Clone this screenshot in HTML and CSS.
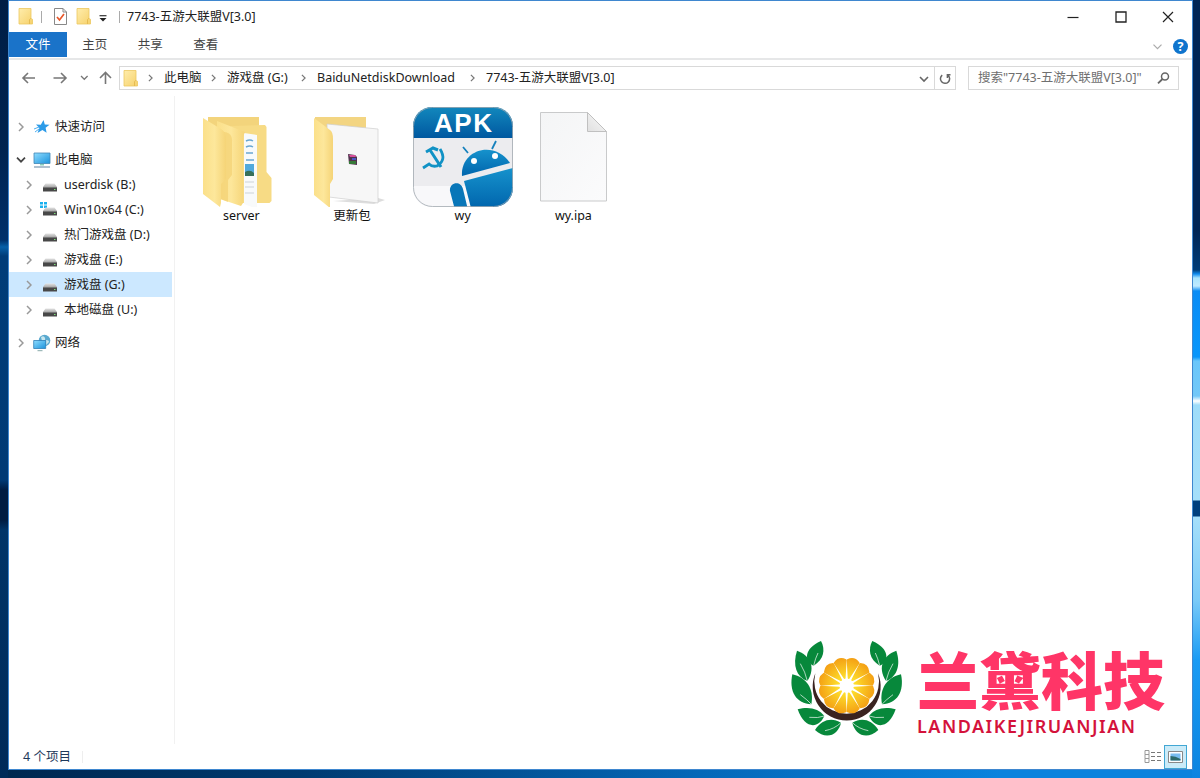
FILE: index.html
```
<!DOCTYPE html>
<html lang="zh-CN">
<head>
<meta charset="utf-8">
<title>7743-五游大联盟V[3.0]</title>
<link rel="stylesheet" href="styles.css">
</head>
<body>
<svg class="defs" width="0" height="0">
  <defs>
    <linearGradient id="fold" x1="0" x2="1" y2="1"><stop offset="0" stop-color="#ffedac"/><stop offset="1" stop-color="#f6d16b"/></linearGradient>
    <linearGradient id="flap" x1="0" x2="1"><stop offset="0" stop-color="#fbe08a"/><stop offset=".5" stop-color="#fde79b"/><stop offset="1" stop-color="#f5d477"/></linearGradient>
    <linearGradient id="screen" x1="0" x2="1" y2="1"><stop offset="0" stop-color="#8fdcff"/><stop offset="1" stop-color="#1b93dc"/></linearGradient>
    <linearGradient id="disk" x2="0" y2="1"><stop offset="0" stop-color="#e4e4e4"/><stop offset="1" stop-color="#aaa"/></linearGradient>
    <linearGradient id="apk" x2="0" y2="1"><stop offset="0" stop-color="#1288bd"/><stop offset="1" stop-color="#0058a0"/></linearGradient>
    <linearGradient id="droid" x2="0" y2="1"><stop offset="0" stop-color="#1692cc"/><stop offset="1" stop-color="#0065ad"/></linearGradient>
    <linearGradient id="paper" x1="0" x2="1" y2="1"><stop offset="0" stop-color="#f4f5f6"/><stop offset="1" stop-color="#fbfbfc"/></linearGradient>
    <linearGradient id="curl" x1="0" x2="1" y1="1" y2="0"><stop offset="0" stop-color="#e0e0e0"/><stop offset="1" stop-color="#fafafa"/></linearGradient>
    <radialGradient id="orange" gradientUnits="userSpaceOnUse" cx="0" cy="0" r="90"><stop offset=".15" stop-color="#ffe930"/><stop offset="1" stop-color="#f39a12"/></radialGradient>
    <symbol id="folder" viewBox="0 0 15 17"><path d="M1 .5h12v10l1.500 .8V16H1z" fill="url(#fold)" stroke="#ecc860" stroke-width=".8"/><path d="M11.500 16v-4.500l1.500-1.200" fill="none" stroke="#e3b94e" stroke-width=".9"/></symbol>
    <symbol id="chev" viewBox="0 0 6 10"><path d="M1 1l4 4-4 4" fill="none" stroke="currentColor" stroke-width="1.500"/></symbol>
    <symbol id="drive" viewBox="0 0 16 14"><path d="M3.500 4.500h9L15 8H1z" fill="url(#disk)"/><path d="M1 8h14v4.500H1z" fill="#484848"/><path d="M1 8h14v1H1z" fill="#777"/><path d="M12 10h1.500v1H12z" fill="#7ee07b"/></symbol>
    <g id="leaves" fill="#07883b">
      <path d="M123 33C136 57 133 88 101 107C74 97 68 57 123 33Z"/>
      <path d="M51 62C90 76 109 111 82 153C49 140 37 106 51 62Z"/>
      <path d="M37 133C79 142 103 176 94 223C49 222 26 184 37 133Z"/>
      <path d="M53 238C86 228 117 236 133 258C115 298 73 297 53 238Z"/>
      <path d="M105 300C125 267 157 262 183 278C176 312 141 333 105 300Z"/>
      <g fill="none" stroke="#fff" stroke-width="2"><path d="M101 107Q106 85 114 69M82 153Q76 126 61 101M94 223Q83 210 61 194M133 258Q115 265 88 262M183 278Q163 297 135 302"/></g>
    </g>
  </defs>
</svg>
<main class="window">
  <header class="titlebar">
    <svg class="tb-folder" width="15" height="17"><use href="#folder"/></svg>
    <i class="sep"></i>
    <svg class="tb-check" width="13" height="17" viewBox="0 0 13 17"><path d="M.5.5h8.500l3.500 3.500v12.500H.5z" fill="#fff" stroke="#888"/><path d="M9 .5V4h3.500" fill="none" stroke="#888"/><path d="M3 9l2.500 3L10 6" fill="none" stroke="#e8572a" stroke-width="1.700"/></svg>
    <svg class="tb-folder2" width="15" height="17"><use href="#folder"/></svg>
    <svg class="tb-drop" width="8" height="7" viewBox="0 0 8 7"><path d="M.5.700h7" stroke="#333" stroke-width="1.200"/><path d="M.5 3h7L4 6.500z" fill="#222"/></svg>
    <i class="sep"></i>
    <span class="title">7743-五游大联盟V[3.0]</span>
    <span class="controls">
      <svg width="12" height="12" viewBox="0 0 12 12"><path d="M.5 6.500h11" stroke="#222" stroke-width="1.200"/></svg>
      <svg width="12" height="12" viewBox="0 0 12 12"><path d="M1 1h10v10H1z" fill="none" stroke="#222" stroke-width="1.300"/></svg>
      <svg width="12" height="12" viewBox="0 0 12 12"><path d="M1 1l10 10M11 1L1 11" stroke="#222" stroke-width="1.200"/></svg>
    </span>
  </header>
  <nav class="tabs">
    <span class="tab file">文件</span><span class="tab">主页</span><span class="tab">共享</span><span class="tab">查看</span>
    <svg class="expand" width="9" height="6" viewBox="0 0 9 6"><path d="M.5.700l4 4 4-4" fill="none" stroke="#aaa" stroke-width="1.200"/></svg>
    <span class="help">?</span>
  </nav>
  <div class="toolbar">
    <svg class="arrows" width="92" height="16" viewBox="0 0 92 16" fill="none" stroke="#777" stroke-width="1.600"><path d="M14 8H2M7 3L2 8l5 5"/><path d="M32.500 8h12M40 3l5 5-5 5"/><path d="M60 6l3.300 3.300L66.600 6" stroke-width="1.300"/><path d="M84.500 14V2.500M79 8l5.500-5.500L90 8"/></svg>
    <div class="address">
      <svg class="af" width="15" height="17"><use href="#folder"/></svg>
      <svg class="c" width="5" height="8"><use href="#chev"/></svg><span class="k1">此电脑</span>
      <svg class="c" width="5" height="8"><use href="#chev"/></svg><span class="k2">游戏盘 (G:)</span>
      <svg class="c" width="5" height="8"><use href="#chev"/></svg><span class="k3">BaiduNetdiskDownload</span>
      <svg class="c" width="5" height="8"><use href="#chev"/></svg><span class="k4">7743-五游大联盟V[3.0]</span>
      <svg class="down" width="10" height="7" viewBox="0 0 10 7"><path d="M1 1l4 4 4-4" fill="none" stroke="#666" stroke-width="1.600"/></svg>
      <span class="refresh"><svg width="12" height="13" viewBox="0 0 12 13"><path d="M3 3.200A4.600 4.600 0 1 0 8.800 3.100M3.600 6V2.800H.5" fill="none" stroke="#666" stroke-width="1.500" transform="translate(12 0) scale(-1 1)"/></svg></span>
    </div>
    <div class="search"><span>搜索"7743-五游大联盟V[3.0]"</span><svg width="13" height="12" viewBox="0 0 13 12"><circle cx="8" cy="4.500" r="3.500" fill="none" stroke="#666" stroke-width="1.500"/><path d="M5.500 7L1 11.300" stroke="#666" stroke-width="1.800"/></svg></div>
  </div>
  <section class="body">
    <aside class="nav">
      <div class="row top"><svg class="x" width="6" height="10"><use href="#chev"/></svg><svg class="ic" width="18" height="16" viewBox="0 0 18 16"><path d="M10.500 1l1.300 4.500 4.700.3-3.900 2.900 1 5-4.200-2.600-4.900 3 1.900-5L3 5.500l4.800.2z" fill="#2c9be8"/><path d="M1 10l5-2M2 13l4-3" stroke="#4daef0"/></svg><span>快速访问</span></div>
      <div class="row top gap"><svg class="x open" width="10" height="6" viewBox="0 0 10 6"><path d="M1 .700l4 4 4-4" fill="none" stroke="#444" stroke-width="1.700"/></svg><svg class="ic" width="18" height="16" viewBox="0 0 18 16"><path d="M1 1h16v10.500H1z" fill="url(#screen)" stroke="#4186b5" stroke-width=".8"/><path d="M7 12h4v1.500H7z" fill="#8cb"/><path d="M1 15h16" stroke="#7b98b0" stroke-width="1.200"/></svg><span>此电脑</span></div>
      <div class="row"><svg class="x" width="6" height="10"><use href="#chev"/></svg><svg class="ic" width="16" height="14"><use href="#drive"/></svg><span>userdisk (B:)</span></div>
      <div class="row"><svg class="x" width="6" height="10"><use href="#chev"/></svg><svg class="ic win" width="18" height="15" viewBox="0 0 18 15"><path d="M0 0h3v2.500H0zM4 0h3v2.500H4zM0 3.500h3V6H0zM4 3.500h3V6H4z" fill="#19b0ee"/><use href="#drive" x="2" y="1" width="16" height="14"/></svg><span>Win10x64 (C:)</span></div>
      <div class="row"><svg class="x" width="6" height="10"><use href="#chev"/></svg><svg class="ic" width="16" height="14"><use href="#drive"/></svg><span>热门游戏盘 (D:)</span></div>
      <div class="row"><svg class="x" width="6" height="10"><use href="#chev"/></svg><svg class="ic" width="16" height="14"><use href="#drive"/></svg><span>游戏盘 (E:)</span></div>
      <div class="row on"><svg class="x" width="6" height="10"><use href="#chev"/></svg><svg class="ic" width="16" height="14"><use href="#drive"/></svg><span>游戏盘 (G:)</span></div>
      <div class="row"><svg class="x" width="6" height="10"><use href="#chev"/></svg><svg class="ic" width="16" height="14"><use href="#drive"/></svg><span>本地磁盘 (U:)</span></div>
      <div class="row top gap"><svg class="x" width="6" height="10"><use href="#chev"/></svg><svg class="ic" width="18" height="18" viewBox="0 0 18 18"><circle cx="11.500" cy="6.500" r="5.800" fill="#5aa9cf"/><path d="M8 3q3-2 4 1t-3 3zM13 6q3 0 3 2l-3 3z" fill="#c7e6ee"/><path d="M.700 6.500h12v8H.700z" fill="url(#screen)" stroke="#2f7fb8" stroke-width=".8"/><path d="M4.500 16.700h5" stroke="#8aa"/></svg><span>网络</span></div>
    </aside>
    <div class="content">
      <div class="files">
        <figure>
          <svg width="100" height="100" viewBox="0 0 100 100"><path d="M17 10h51v60H17z" fill="#f3d47c"/><path d="M40 19l34-1 1.500 2v45l5 6v23l-2 2H45z" fill="#f7db85"/><path d="M53 26l13 2v74l-13-5z" fill="#f8fafb"/><path d="M55 34q4-2 7 0M55 40q4-2 7 0M55 46h7M55 53h8" stroke="#69a7d2" stroke-width="1.500" fill="none"/><path d="M54 57h9v12h-9z" fill="#51a9dc"/><path d="M54 65q5-3 9 1v3h-9z" fill="#37705a"/><path d="M54 75h9M54 80h9M54 86h9" stroke="#ccd3d8"/><path d="M26 14l28 11q-2 3-2 8v63l-2 3-24-8z" fill="url(#flap)"/><path d="M27 25q15-2 14 10v33l-4 5v22l-10-4z" fill="#f2d070" opacity=".65"/><path d="M17 10l16 10q2 2 2 7v72l-5 2-18-13V12q0-2 5-2z" transform="translate(0 0)" fill="none"/><path d="M12 11l18 11q5 3 5 10v40l-5 5v19l-1 4-17-13z" fill="url(#flap)"/></svg>
          <figcaption>server</figcaption>
        </figure>
        <figure>
          <svg width="100" height="100" viewBox="0 0 100 100"><path d="M13 10h51v30H13z" fill="#f3d582"/><path d="M76 91l7 2-11 4-41-3z" fill="#ddd"/><path d="M25 17l51 5v74l-49-6z" fill="#f7f7f7" stroke="#cfcfcf" stroke-width=".7"/><path d="M46 47l7 1 2 2v8l-8-1z" fill="#51324e"/><path d="M47 48h6l1 2h-6z" fill="#d64e9a"/><path d="M47 54h7v3h-7z" fill="#367a38"/><path d="M50 51h4v2h-4z" fill="#4c57c5"/><path d="M12 11l16 12q3 2 3 9v40l-3 5v24L12 88z" fill="url(#flap)"/></svg>
          <figcaption>更新包</figcaption>
        </figure>
        <figure>
          <svg width="100" height="100" viewBox="0 0 100 100"><clipPath id="r"><rect width="100" height="100" rx="19"/></clipPath><g clip-path="url(#r)"><path d="M0 0h100v100H0z" fill="#ececef"/><path d="M0 79h100v21H0z" fill="#f8f8fa"/><path d="M0 0h100v31H0z" fill="url(#apk)"/><path d="M49 69C47 43 81 32 97 56z" fill="url(#droid)"/><path d="M51 74l49-13v40H58z" fill="url(#droid)"/><path d="M55 46l-5-6M79 42l4-8" stroke="#1681bd" stroke-width="1.800"/><circle cx="61" cy="54" r="3" fill="#fff"/><circle cx="82" cy="49" r="3" fill="#fff"/><path d="M37 84c-1-9 11-11 13-2l5 21H42z" fill="#0876b8"/></g><g fill="none" stroke="#1192c5" stroke-width="3"><path d="M13 45l7-4 5 2M17 43l11 17"/><path d="M27 42q7 11-3 17-5 1-8-2l-6 4" stroke-width="2.800"/></g><rect x=".5" y=".5" width="99" height="99" rx="19" fill="none" stroke="#a2aab0" stroke-width=".8"/><text x="50" y="25" text-anchor="middle" textLength="58" class="apktext">APK</text></svg>
          <figcaption>wy</figcaption>
        </figure>
        <figure>
          <svg width="100" height="100" viewBox="0 0 100 100"><path d="M17.500 5.500h47l19 19V94h-66z" fill="url(#paper)" stroke="#c9cacb"/><path d="M64.500 5.500v19h19z" fill="url(#curl)" stroke="#c0c0c0"/></svg>
          <figcaption>wy.ipa</figcaption>
        </figure>
      </div>
      <div class="brand">
        <svg width="130" height="115" viewBox="0 0 390 345"><use href="#leaves"/><use href="#leaves" transform="translate(400 0) scale(-1 1)"/><circle cx="200" cy="172" r="104" fill="#fff"/><path d="M106 130A102 102 0 1 0 294 130A97 97 0 1 1 106 130Z" fill="#3a2320"/><g transform="translate(200 167)"><g id="w6" fill="url(#orange)" stroke="url(#orange)" stroke-width="6" stroke-linejoin="round"><g id="w3"><path id="w" d="M0-24L-17-75Q0-89 17-75Z" transform="rotate(15)"/><use href="#w" transform="rotate(30)"/><use href="#w" transform="rotate(60)"/></g><use href="#w3" transform="rotate(90)"/></g><use href="#w6" transform="rotate(180)"/></g></svg>
        <div class="words"><b>兰黛科技</b><span>LANDAIKEJIRUANJIAN</span></div>
      </div>
    </div>
  </section>
  <footer class="status"><span>4 个项目</span><i></i>
    <svg class="list" width="18" height="14" viewBox="0 0 18 14"><path d="M1 .5h4v4H1zM1 4.500h4v4H1zM1 8.500h4v4H1z" fill="#fff" stroke="#999"/><path d="M7 2.500h4M13 2.500h4M7 6.500h4M13 6.500h4M7 10.500h4M13 10.500h4" stroke="#777" stroke-width="1.200"/></svg>
    <span class="large"><svg width="15" height="12" viewBox="0 0 15 12"><path d="M.5.5h14v11H.5z" fill="#fff" stroke="#888"/><path d="M2.500 2.500h10v7h-10z" fill="#79bdf0"/><path d="M2.500 5q5 0 10 3v1.500h-10z" fill="#2d6b6a"/></svg></span>
  </footer>
</main>
</body>
</html>
```
FILE: styles.css
```
* { box-sizing: border-box; }
body {
  margin: 0; width: 1200px; height: 778px; padding: 0 7px 8px 8px; overflow: hidden;
  font: 12.5px/16px "Noto Sans", "Noto Sans CJK SC", sans-serif; color: #222;
  background:
    linear-gradient(#002555 0 230px, #003d78 270px, #0e8cf0 274px, #a8e4fd 278px, #bfeaff 286px, #0a8cf5 291px, #0896fb 357px, #6ac6fa 361px, #72c8f8 396px, #fff 401px, #9edcf9 405px, #a5dffa 500px, #003f7d 501px 516px, #a5dffa 517px, #7acaf8 600px, #1a9bf4 660px, #0c84e0 778px) right / 8px 778px no-repeat,
    linear-gradient(#001d45 0, #002450 150px, #00306a 240px, #0760a8 247px, #003c78 256px, #003a75 480px, #001c42 490px 520px, #003468 530px, #002a58 778px) left / 8px 778px no-repeat,
    linear-gradient(90deg, #00274f, #003a70 300px, #0468b8 700px, #0a83dd 1000px, #0a83dd);
}
.defs { position: absolute; }
svg { display: block; flex: none; }
.window { width: 1185px; height: 770px; border: 1px solid #3f87cf; background: #fff; display: flex; flex-direction: column; }
.titlebar { height: 31px; display: flex; align-items: center; padding-left: 9px; }
.sep { width: 1px; height: 12px; background: #aaa; }
.tb-folder { margin-right: 8px; }
.tb-check { margin-left: 12px; margin-right: 9px; }
.tb-folder2 { margin-right: 8px; }
.tb-drop { margin: 3px 12px 0 0; }
.title { margin-left: 7px; }
.controls { margin-left: auto; display: flex; gap: 35.500px; padding-right: 18px; }
.tabs { height: 28px; display: flex; align-items: flex-start; border-bottom: 2px solid #e6e7e8; }
.tab { width: 55.500px; height: 25px; line-height: 26px; text-align: center; color: #444; }
.file { width: 58px; background: #1a73c9; color: #fff; }
.expand { margin: 12px 11px 0 auto; }
.help { width: 15px; height: 15px; margin: 7px 4px 0 0; border-radius: 50%; background: #0f74cd; color: #fff; font-weight: 700; line-height: 15px; text-align: center; }
.toolbar { height: 36px; display: flex; padding: 6px 13px 0 12px; }
.arrows { margin: 4px 6px 0 0; }
.address { width: 837px; height: 24px; border: 1px solid #d9d9d9; display: flex; align-items: center; padding-left: 3px; white-space: nowrap; }
.af { margin-right: 10px; }
.c { color: #777; margin-right: 11px; }
.k1 { width: 47px; }
.k2 { width: 74px; }
.k3 { width: 153px; }
.down { margin: 2px 5px 0 auto; }
.refresh { width: 21px; height: 22px; border-left: 1px solid #d9d9d9; display: grid; place-items: center; }
.search { width: 211px; height: 24px; margin-left: 12px; border: 1px solid #d9d9d9; display: flex; align-items: center; justify-content: space-between; padding: 0 8px 0 9px; color: #707070; white-space: nowrap; }
.body { flex: 1; display: flex; min-height: 0; }
.nav { width: 166px; height: 648px; padding: 18px 2px 0 0; border-right: 1px solid #f1f1f1; }
.row { height: 25px; display: flex; align-items: center; padding-left: 17px; white-space: nowrap; }
.row.top { padding-left: 9px; }
.gap { margin-top: 8px; }
.on { background: #cce8ff; }
.x { color: #999; margin-right: 11px; }
.x.open { margin: 0 9px 0 -2px; }
.ic { margin: 2px 5px 0 0; }
.row:not(.top) .ic { margin-left: -1px; margin-right: 6px; }
.row:not(.top) .win { margin: 0 6px 0 -3px; }
.row.top .ic { margin-left: -2px; margin-right: 4px; margin-top: 0; }
.content { flex: 1; display: flex; flex-direction: column; justify-content: space-between; }
.files { display: flex; padding: 11px 0 0 11px; }
figure { margin: 0; width: 110.700px; display: flex; flex-direction: column; align-items: center; color: #111; }
figcaption { margin-top: 1px; }
.apktext { font: 700 26px "Liberation Sans", sans-serif; fill: #fff; }
.brand { display: flex; margin: 0 0 0 605px; }
.words { display: flex; flex-direction: column; padding: 13px 0 0 7px; }
.words b { font: 900 62px/70px "Noto Sans CJK SC", sans-serif; color: #ff3567; }
.words span { font: 600 18px/22px "Noto Sans", sans-serif; letter-spacing: 1.500px; color: #d4123b; margin-top: 2px; }
.status { height: 24px; display: flex; align-items: center; padding: 0 5px 0 14px; color: #1e395b; }
.status i { width: 1px; height: 12px; background: #eee; margin-left: 11px; }
.list { margin: 0 2px 0 auto; }
.large { width: 23px; height: 24px; border: 1px solid #42a7d4; background: #cbebf8; display: grid; place-items: center; }
```
